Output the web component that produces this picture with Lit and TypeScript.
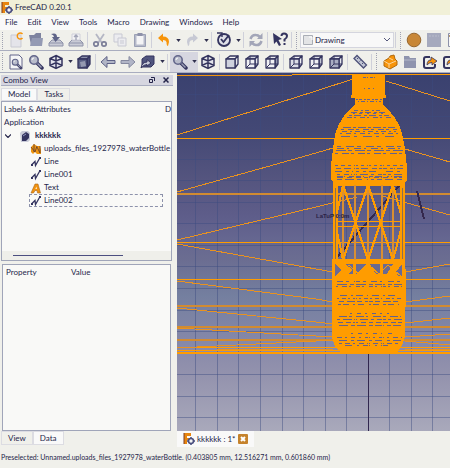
import { LitElement, html, svg, css } from "lit";
import { customElement } from "lit/decorators.js";

const N = "#34345f";
const G = "#a3a6b8";
const O = "#f7940a";

const cube = (front: string, top: string, side: string, cross = false) => svg`
  <g stroke=${N} stroke-width="1.3" stroke-linejoin="round">
    <path d="M2 5 L6 2 H14 L11 5 Z" fill=${top}/>
    <path d="M11 5 L14 2 V10 L11 14 Z" fill=${side}/>
    <path d="M2 5 H11 V14 H2 Z" fill=${front}/>
    ${cross ? svg`<path d="M6 2 V10 H14 M6 10 L2 14" fill="none" stroke-width="1"/>` : ""}
  </g>`;

const iso = svg`<path d="M8 1.5 L14 4.5 V11.5 L8 14.5 L2 11.5 V4.5 Z M2 4.5 L8 7 L14 4.5 M8 1.5 V14.5 M2 11.5 L8 8.5 L14 11.5" fill="#e2e3ec" stroke=${N} stroke-width="1.5"/>`;

const glass = svg`
  <path d="M9 9 L14 14" stroke=${N} stroke-width="3.5" stroke-linecap="round"/>
  <path d="M9.5 9.5 L13.5 13.5" stroke="#9a9db5" stroke-width="1.5"/>
  <circle cx="6" cy="6" r="4.2" fill="#b9bccb" stroke="#62658a" stroke-width="1.6"/>
  <path d="M4 6 A2 2 0 0 1 6 4" fill="none" stroke="#fff"/>`;

const share = svg`
  <path d="M8 3 H4 Q2 3 2 5 V12 Q2 14 4 14 H11 Q13 14 13 12 V10" fill="none" stroke=${N} stroke-width="2"/>
  <path d="M5 11 Q5 6 9 6 V3 L15 7 L10 11 V8.5 Q7 8.5 5 11 Z" fill=${O} stroke=${N} stroke-width="0.8"/>`;

const tray = svg`
  <path d="M4 8 H12 L15 11 V14 H1 V11 Z" fill="#c9cbd6" stroke="#8f93aa"/>
  <path d="M1 11 H15" stroke="#8f93aa"/>`;

const undo = (c: string) => svg`<path d="M2 6 L7 1.5 V4.5 Q13 4.5 13 10 L12 14 Q10.5 14 10.5 10 Q10 8 7 8 V10.5 Z" fill=${c}/>`;

const icons: Record<string, unknown> = {
  new: svg`<path d="M3 3 H13 V15 H3 Z" fill="#e4e4ea" stroke="#c9cad3"/><path d="M14.5 2 A3 3 0 1 0 14.5 6" fill="none" stroke=${O} stroke-width="1.4"/>`,
  open: svg`<path d="M1 3 H6 L8 1 H13 V13 H3 Z" fill="#7e839f"/><path d="M4 6 H15 L14 14 H2 Z" fill="#949ab3"/>`,
  save: svg`${tray}<path d="M3 2 Q9 0 9 5 H12 L7.5 10 L4 5 H6 Q6 3 3 2 Z" fill="#5f6488"/>`,
  print: svg`${tray}<path d="M4 8 V2 H12 V8 Z" fill="#f3f3f5" stroke="#cfd0da"/><path d="M8 3 V8 M6 5 L8 3 L10 5" fill="none" stroke=${G} stroke-width="1.4"/>`,
  cut: svg`<path d="M4 2 L10 11 M12 2 L6 11" stroke="#b4b6c4" stroke-width="1.8"/><g fill="none" stroke="#7b7e98" stroke-width="1.7"><circle cx="4" cy="12" r="2.2"/><circle cx="12" cy="12" r="2.2"/></g>`,
  copy: svg`<g fill="#ececf0" stroke="#c8c9d3"><path d="M2 2 H10 V10 H2 Z"/><path d="M6 6 H14 V14 H6 Z"/></g><path d="M8 9 H12 M8 11 H12" stroke="#c8c9d3"/>`,
  paste: svg`<path d="M2.5 2.5 H13.5 V14.5 H2.5 Z" fill="#b5b9c9" stroke="#9ba0b5"/><path d="M4.500 4 H11.500 V12.500 H4.500 Z" fill="#f4f4f6"/><path d="M5.500 1 H10.500 V4 H5.500 Z" fill="#8d91a9"/>`,
  undo: undo(O),
  redo: svg`<g transform="matrix(-1 0 0 1 16 0)">${undo("#c7c9d4")}</g>`,
  check: svg`<circle cx="8" cy="8" r="6" fill="#dfe0e8" stroke=${N} stroke-width="1.8"/><path d="M5 7 L7.500 10 L13 3" fill="none" stroke=${N} stroke-width="1.8"/><path d="M1 1 H6 V5" fill="none" stroke=${N} stroke-width="1.4"/>`,
  refresh: svg`<g fill="none" stroke=${G} stroke-width="2.600"><path d="M2.500 7 Q4 2.500 8 3 Q10 3 12 5"/><path d="M13.500 9 Q12 13.500 8 13 Q6 13 4 11"/></g><path d="M14.500 1 V7 H9 Z M1.500 15 V9 H7 Z" fill=${G}/>`,
  what: svg`<path d="M1 1 L10 7 L6.500 8 L9 13 L7 14 L4.500 9.500 L2 12 Z" fill=${N}/><path d="M9.500 4 Q9.500 1.500 12 1.500 Q15 1.500 15 4 Q15 6 12.500 7.500 V9.500" fill="none" stroke=${N} stroke-width="2"/><path d="M11.500 11 H13.500 V13 H11.500 Z" fill=${N}/>`,
  circle: svg`<circle cx="8" cy="8" r="6.800" fill="#c88736" stroke="#97672f"/>`,
  square: svg`<path d="M1 1 H15 V15 H1 Z" fill="#a5a9bd"/><path d="M3 4 H13" stroke="#b9bccb" stroke-dasharray="2 1"/>`,
  page: svg`<path d="M2.500 1.500 H13 V14.500 H2.500 Z" fill="#f6f6f6" stroke="#8d91a9"/><path d="M3 4 H12" stroke="#b59a72" stroke-width="2"/>`,
  fit: svg`<path d="M2 1 H11 L14 4 V15 H2 Z" fill="#f5f5f7" stroke="#62658a"/><g transform="translate(3 4) scale(.7)">${glass}</g>`,
  glass,
  iso,
  style: svg`${cube("#5b6186", "#8b90ab", "#4a4f78")}<path d="M4 8 L9 7 L10 12 L5 13 Z" fill="#9599b1"/>`,
  left: svg`<path d="M1 8 L7 2.500 V6.500 H15 V9.500 H7 V13.500 Z" fill="#b1b5c6" stroke="#5e6287"/>`,
  right: svg`<path d="M15 8 L9 2.500 V6.500 H1 V9.500 H9 V13.500 Z" fill="#b1b5c6" stroke="#85899f"/>`,
  link: svg`<path d="M2 5 L6 2 H14 V10 L11 13 H2 Z" fill="#50557e" stroke=${N}/><path d="M1 14 Q2 8 7 8 V5.500 L11 9 L7 12 V10.500 Q4 10.500 1 14 Z" fill="#c5c8d6" stroke=${N}/>`,
  front: cube("#cfd2de", "#f1f1f5", "#e6e7ee"),
  top: cube("#f1f1f5", "#cfd2de", "#e6e7ee", true),
  side: cube("#f1f1f5", "#e6e7ee", "#9297b1", true),
  rear: cube("#dcdee7", "#f1f1f5", "#f1f1f5", true),
  bottom: cube("#f1f1f5", "#dcdee7", "#c1c5d4", true),
  leftv: cube("#a9adc2", "#e6e7ee", "#e6e7ee", true),
  ruler: svg`<path d="M2 4.500 L5 1.500 L14.500 11 L11.500 14 Z" fill="#c1c5d4" stroke="#4d5179" stroke-width="1.300"/><path d="M6 4 L5 5 M8.500 6.500 L7.500 7.500 M11 9 L10 10" stroke="#4d5179"/>`,
  part: svg`<path d="M2 7 L7 4 L8 2 L12 1 L13 5 L15 7 V11 L8 15 L2 12 Z" fill=${O} stroke="#b06a10"/><path d="M2 7 L7 10 L14 7 M7 10 V14 M7 4 L11 6" fill="none" stroke="#fbd49a"/>`,
  folder: svg`<path d="M2 2 H7 L8 4 H14 V14 H2 Z" fill="#8f94ae"/><path d="M2 6 H14" stroke="#b3b7c9"/>`,
  share,
};

const icon = (name: string) => html`<svg viewBox="0 0 16 16" aria-hidden="true">${icons[name]}</svg>`;

const logo = html`<svg class="small" viewBox="0 0 12 12" aria-hidden="true">
  <path d="M1 0 H8 V3 H4 V5 H7 V7 H4 V11 H1 Z" fill="#e8860f"/><path d="M1 0 V11" stroke="#7d3a22"/>
  <circle cx="8" cy="8" r="2.500" fill="#f5f5f5" stroke="#4c5080" stroke-width="1.600"/>
  <path d="M8 4 V5.500 M8 10.500 V12 M4 8 H5.500 M10.500 8 H12" stroke="#4c5080" stroke-width="1.500"/></svg>`;

const treeIcons: Record<string, unknown> = {
  doc: svg`<path d="M1 3 L3 1 H9 L11 3 V10 L9 12 H2 Z" fill="#c9cbd8"/><path d="M3 5 L7 2 L10 4 V8 L7 11 H3 Z" fill=${N}/><path d="M4 6 L7 4" stroke="#8f94c0"/>`,
  mesh: svg`<path d="M1 4 L4 1 L7 3 L10 3 L11 7 V11 H7 L5 9 L3 11 L1 9 Z" fill="#ef950f"/><path d="M4 1 V9 M7 3 L5 9 M10 3 V10 M1 4 L5 9 M7 4 L10 10" stroke="#5b3a33" stroke-width=".8"/>`,
  line: svg`<path d="M1.500 9 L5 5.500 L5.500 9.500 L9.500 2.500" fill="none" stroke=${N} stroke-width="1.300"/><path d="M1 8 H3 V10 H1 Z M9 1 H11 V3 H9 Z" fill=${N}/>`,
  text: svg`<path d="M1 11 L5 2 H8 L10.500 11 H7.500 L7 8.500 H5 L3.500 11 Z" fill="#f0920f" stroke="#a8661c" stroke-width=".6"/><path d="M5.500 7 L6.300 4.500 L6.800 7 Z" fill="#fff"/>`,
};
const treeIcon = (n: string) => html`<svg class="small" viewBox="0 0 12 12" aria-hidden="true">${treeIcons[n]}</svg>`;

const row1 = ["#", "new", "open", "save", "print", "|", "cut", "copy", "paste", "|", "undo", "v", "redo", "v", "|", "check", "v", "|", "refresh", "|", "what", "|"];
const row1b = ["|", "#", "circle", "square", "page"];
const row2 = ["#", "fit", "glass", "iso", "v", "style", "|", "left", "right", "link", "v", "|", "*", "iso", "|", "front", "top", "side", "|", "rear", "bottom", "leftv", "|", "ruler", "|", "#", "part", "folder", "share", "share"];

const drop = html`<button class="drop" aria-label="More"><svg viewBox="0 0 6 4" aria-hidden="true"><path d="M0 0 H6 L3 4 Z" fill="#30304f"/></svg></button>`;

const tools = (list: string[]) =>
  list.map((n) => {
    if (n === "#") return html`<span class="grip"></span>`;
    if (n === "|") return html`<span class="sep"></span>`;
    if (n === "v") return drop;
    if (n === "*") return html`<span class="pressed"><button class="tool" aria-label="zoom">${icon("glass")}</button>${drop}</span>`;
    return html`<button class="tool" aria-label=${n}>${icon(n)}</button>`;
  });

/* Scene coordinates: 273 x 358, origin at the viewport's top left corner. */
const gridX = [19, 41, 62, 84, 106, 127, 149, 170, 192, 213, 235, 256];
const gridY = [21, 43, 64, 86, 107, 129, 150, 172, 193, 215, 237, 258, 280, 301, 323, 344];
const levels: [number, number][] = [[65, 1], [121, 2], [169, 1], [206, 1], [233, 2], [254, 2], [267, 2], [274, 1], [277, 1]];

/* Rows of gaps in the mesh: y, left, right, dash pattern */
const gaps: [number, number, number, string][] = [
  [4, 186, 198, "3 1 1 2"], [15, 187, 198, "1 3 2 3"],
  [26, 179, 205, "2 1 3 2"], [28, 181, 204, "1 2 4 2"],
  [37, 177, 206, "4 3 2 2"], [39, 174, 210, "6 3 3 2"], [40, 176, 208, "2 4 3 5"], [42, 172, 212, "3 2 7 3"], [44, 170, 215, "5 2 2 4"],
  [54, 166, 218, "8 2 3 2"], [56, 164, 220, "3 4 6 2"], [58, 165, 219, "5 3 2 3"], [60, 163, 222, "2 4 5 3"], [63, 164, 221, "9 4 3 6"],
  [73, 160, 225, "4 5 8 3"], [75, 160, 226, "7 3 2 5"], [77, 159, 226, "10 2 4 3"], [80, 158, 226, "3 4 7 2"],
  [92, 158, 226, "3 3 4 3"], [95, 159, 226, "5 2 8 3"], [98, 158, 226, "7 4 3 3"], [101, 160, 225, "3 3 9 2"], [103, 160, 226, "8 4 5 2"], [104, 160, 225, "6 2 7 3"], [106, 160, 225, "5 3 9 3"],
  [208, 160, 225, "6 3 3 5"], [211, 160, 225, "10 3 4 2"], [213, 159, 225, "2 4 5 2"],
  [222, 163, 220, "7 4 2 3"], [225, 160, 225, "2 3 4 2"], [228, 162, 224, "5 3 8 2"], [231, 161, 222, "3 2 6 4"],
  [240, 173, 212, "2 5 4 4"], [243, 162, 224, "8 2 3 4"], [246, 160, 225, "3 3 9 2"], [249, 161, 225, "5 3 5 2"], [252, 162, 224, "9 3 4 2"],
  [260, 174, 215, "2 5 4 4"], [264, 160, 225, "5 3 2 4"], [267, 162, 224, "8 4 3 3"], [270, 162, 222, "3 3 5 3"], [272, 168, 214, "7 5 2 4"],
];

const scene = html`<svg class="scene" viewBox="0 0 273 358" preserveAspectRatio="xMidYMid slice" role="img" aria-label="Water bottle mesh">
  <defs><linearGradient id="sky" x1="0" y1="0" x2="0" y2="1">
    <stop offset="0" stop-color="#3a416f"/><stop offset=".16" stop-color="#434875"/><stop offset=".3" stop-color="#55557f"/>
    <stop offset=".4" stop-color="#5e5d8a"/><stop offset=".46" stop-color="#656690"/><stop offset=".52" stop-color="#6b6d91"/>
    <stop offset=".62" stop-color="#747f9f"/><stop offset=".74" stop-color="#8487a8"/><stop offset=".84" stop-color="#9392ad"/>
    <stop offset="1" stop-color="#a9a9bb"/></linearGradient></defs>
  <rect width="273" height="358" fill="url(#sky)"/>
  <g fill="#3b4b80" fill-opacity=".45">
    ${gridX.map((x) => svg`<rect x=${x - 1} y="0" width="1" height="358"/>`)}
    ${gridY.map((y) => svg`<rect x="0" y=${y} width="273" height="1"/>`)}
  </g>
  <rect x="191" y="281" width="1" height="77" fill="#31274f"/>
  <g fill="#f2950f">
    <rect x="0" y="2" width="115" height="1"/><rect x="115" y="1" width="158" height="1" fill="#ff9c00"/>
    ${levels.map(([y, h]) => svg`<rect x="0" y=${y - (h > 1 ? 1 : 0)} width="273" height=${h} fill=${h > 1 ? "#d18b31" : "#ff9c00"}/>`)}
    <rect x="0" y="279" width="273" height="2" fill="#ff9c00"/>
  </g>
  <path fill="none" stroke="#e9921f" d="M0 62 L139 18 L176 6 M0 119 L139 80 L156 75 M0 167 L139 134 L180 124
    M0 171 L139 196 L156 199 M0 208 L139 226 L156 229 M0 235 L139 249 L156 251 M0 255 L156 264 M0 275 L139 268 L156 267 M40 276 H156
    M209 8 L273 28 M228 76 L273 89 M205 123 L273 142 M228 199 L273 191 M228 229 L273 223 M228 250 L273 245 M228 264 L273 261 M228 268 L273 272 M228 276 H273"/>
  <path fill="none" stroke="#34284d" stroke-width="2" d="M159 185 L223 112 M240 118 L247 146"/>
  <g fill="#ff9c00">
    <path d="M175 1 H208 V22 H209 V25 H206 V32 C214 38 222 49 225 60 L228 76 L230 95 V107 L228 109 V113 H156 V109 L154 106 V92 L156 76 L158 61
      C162 49 168 39 178 32 V25 H174 V22 H175 Z"/>
    <path d="M155 186 H228 L229 205 L228 264 L225 272 L220 280 H164 L158 273 L155 264 Z"/>
    <rect x="156" y="113" width="5" height="74"/><rect x="223" y="113" width="5" height="74"/>
  </g>
  <path fill="#6b6a91" d="M158 191 L164 197 L158 203 Z M168 191 H176 V201 H171 L176 197 Z M179 191 H189 L182 201 H179 Z M193 191 H203 V201 H199 Z M206 191 H216 L210 201 H206 Z M219 199 L225 191 V203 H221 Z"/>
  <g fill="none" stroke="#ff9c00" stroke-width="2">
    <path d="M166 112 V187 M178 112 V187 M191 112 V187 M205 112 V187 M216 112 V187" stroke="#d98f33"/>
    <path d="M158 149 L166 112 L191 187 L216 112 L226 149 L216 187 L191 112 L166 187 Z"/>
    <path d="M158 148 H226 M158 153 H226" stroke-width="1"/>
  </g>
  <g fill="none" stroke="#65628b">
    ${gaps.map(([y, a, b, d]) => svg`<path d="M${a} ${y + 0.5} H${b}" stroke-dasharray=${d}/>`)}
    <path d="M158 115 V186 M225 115 V186" stroke="#8b7052"/>
  </g>
  <g fill="none" stroke="#ff9c00"><path d="M178 86 V111 M205 86 V111 M166 95 V111 M216 95 V111 M191 92 V111 M164 108 L178 98 L191 108 L205 98 L220 108 M178 190 V280 M205 190 V280 M191 190 V280 M160 203 L172 192 L184 203 M178 203 L191 191 L204 203 M200 203 L211 192 L224 203"/></g>
  <text x="139" y="145" class="label">LaTuP 0:0m</text>
</svg>`;

@customElement("app-root")
export class AppRoot extends LitElement {
  static styles = css`
    :host { display: flex; flex-direction: column; min-height: 100vh; background: #f0f0eb; color: #25254a; font: 8px/13px Lato, "Noto Sans", sans-serif; overflow: hidden; }
    * { box-sizing: border-box; }
    svg { display: block; flex: none; }
    button { border: 0; padding: 0; margin: 0; background: none; color: inherit; font: inherit; display: flex; align-items: center; justify-content: center; flex: none; }
    .titlebar { height: 15px; display: flex; align-items: center; gap: 2px; padding: 0 1px; background: #f1f0d8; }
    .small { width: 12px; height: 12px; }
    .menu { height: 15px; display: flex; align-items: center; gap: 10px; padding: 0 5px; background: #f9f9f9; }
    .bar { height: 21px; display: flex; align-items: center; overflow: hidden; border-bottom: 1px solid #a9adbf; }
    .bar.second { height: 22px; }
    .tool { width: 20px; height: 20px; }
    .tool svg { width: 16px; height: 16px; }
    .drop { width: 8px; height: 20px; }
    .drop svg { width: 5px; height: 3px; }
    .pressed { display: flex; flex: none; background: #d6d6e0; }
    .grip { flex: none; width: 2px; height: 17px; margin: 0 2px; border-left: 1px dotted #a0a2b2; }
    .sep { flex: none; width: 1px; height: 16px; margin: 0 2px 0 1px; background: #cfd0da; }
    .picker { flex: none; position: relative; width: 94px; height: 16px; display: flex; }
    .picker svg { position: absolute; left: 3px; top: 3px; width: 10px; height: 10px; }
    .picker svg.chev { left: auto; right: 4px; top: 6px; width: 6px; height: 4px; }
    select { appearance: none; width: 100%; border: 1px solid #d4d5de; background: #f8f8f8; padding: 0 14px; color: inherit; font: inherit; }
    .work { flex: 1; display: flex; min-height: 0; }
    .side { flex: none; width: 177px; display: flex; flex-direction: column; padding: 2px 4px 0 1px; }
    .head { height: 11px; display: flex; align-items: center; gap: 8px; padding: 0 4px 0 2px; background: #d6d6e0; border-bottom: 1px solid #a9adc0; }
    .head span { flex: 1; }
    .head svg { width: 6px; height: 6px; }
    .tabs { display: flex; align-items: stretch; height: 15px; padding-top: 2px; }
    .tab { padding: 0 6px; border: 1px solid #dcdce2; }
    .tab.on { background: #f9f9f9; }
    .box { background: #f9f9f7; border: 1px solid #a0a5b9; display: flex; flex-direction: column; }
    .tree { height: 160px; margin-right: 1px; padding-top: 1px; }
    .row { height: 13px; display: flex; align-items: center; padding-left: 2px; white-space: nowrap; }
    .row.top { justify-content: space-between; }
    .row.doc { gap: 4px; font-weight: 700; }
    .row.doc .open { width: 6px; height: 4px; margin: 0 4px 0 1px; }
    .row.item { margin: 0 8px 0 27px; padding-left: 0; gap: 2px; border: 1px dotted transparent; }
    .row.sel { border: 1px dashed #8d92ab; }
    .scroll { margin-top: auto; height: 9px; background: #efefea; display: flex; align-items: center; padding-left: 11px; }
    .thumb { width: 110px; height: 1px; background: #4c4f80; }
    .props { flex: 1; margin: 3px 2px 0 1px; padding: 1px 3px; }
    table { width: 100%; border-collapse: collapse; }
    th { text-align: left; font-weight: 400; padding: 0; width: 65px; }
    th + th { width: auto; }
    .tabs.low { padding: 0 0 2px; height: 16px; }
    .view { flex: 1; min-width: 0; display: flex; flex-direction: column; }
    .canvas { flex: 1; min-height: 0; position: relative; }
    .scene { position: absolute; inset: 0; width: 100%; height: 100%; shape-rendering: crispEdges; }
    .label { font: bold 6px "Liberation Sans", sans-serif; fill: #2b2145; }
    .doctab { align-self: flex-start; display: flex; align-items: center; gap: 2px; height: 16px; padding: 0 6px; background: #f9f9f9; }
    .close svg { width: 10px; height: 10px; }
    .status { height: 21px; display: flex; align-items: center; padding: 0 1px; white-space: nowrap; font-size: 7px; }
  `;

  render() {
    return html`
      <header class="titlebar">${logo}<span>FreeCAD 0.20.1</span></header>
      <nav class="menu">${["File", "Edit", "View", "Tools", "Macro", "Drawing", "Windows", "Help"].map((m) => html`<button>${m}</button>`)}</nav>
      <div class="bar">
        ${tools(row1)}<span class="grip"></span>
        <label class="picker">
          <select aria-label="Workbench"><option>Drawing</option></select>
          <svg viewBox="0 0 10 10" aria-hidden="true"><path d="M.5 .5 H9.500 V9.500 H.5 Z" fill="#e3e4e6" stroke="#a9adb5"/><path d="M6 2 H9 V5" fill="none" stroke="#fff"/></svg>
          <svg class="chev" viewBox="0 0 6 4" aria-hidden="true"><path d="M0 0 L3 3 L6 0" fill="none" stroke="#55587c"/></svg>
        </label>
        ${tools(row1b)}
      </div>
      <div class="bar second">${tools(row2)}</div>
      <main class="work">
        <aside class="side">
          <div class="head"><span>Combo View</span>
            <button aria-label="Float"><svg viewBox="0 0 6 6"><path d="M2 .5 H5.500 V4 M.5 2.500 H3.500 V5.500 H.5 Z" fill="none" stroke="#25254a"/></svg></button>
            <button aria-label="Close panel"><svg viewBox="0 0 6 6"><path d="M.5 .5 L5.500 5.500 M5.500 .5 L.5 5.500" stroke="#25254a" stroke-width="1.500"/></svg></button>
          </div>
          <div class="tabs"><button class="tab on">Model</button><button class="tab">Tasks</button></div>
          <section class="box tree">
            <div class="row top"><span>Labels &amp; Attributes</span><span>D</span></div>
            <div class="row">Application</div>
            <div class="row doc"><svg class="open" viewBox="0 0 6 4"><path d="M0 .5 L3 3.500 L6 .5" fill="none" stroke="#25254a" stroke-width="1.200"/></svg>${treeIcon("doc")}<span>kkkkkk</span></div>
            ${[["mesh", "uploads_files_1927978_waterBottle"], ["line", "Line"], ["line", "Line001"], ["text", "Text"], ["line", "Line002"]].map(
              ([i, t]) => html`<div class="row item ${t === "Line002" ? "sel" : ""}">${treeIcon(i)}<span>${t}</span></div>`
            )}
            <div class="scroll"><div class="thumb"></div></div>
          </section>
          <section class="box props"><table><tr><th>Property</th><th>Value</th></tr></table></section>
          <div class="tabs low"><button class="tab">View</button><button class="tab on">Data</button></div>
        </aside>
        <section class="view">
          <div class="canvas">${scene}</div>
          <div class="doctab">${logo}<span>kkkkkk : 1*</span>
            <button class="close" aria-label="Close document"><svg viewBox="0 0 10 10"><rect width="10" height="10" rx="1" fill="#c5822c"/><path d="M3 3 L7 7 M7 3 L3 7" stroke="#fff" stroke-width="2"/></svg></button>
          </div>
        </section>
      </main>
      <footer class="status">Preselected: Unnamed.uploads_files_1927978_waterBottle. (0.403805 mm, 12.516271 mm, 0.601860 mm)</footer>
    `;
  }
}
